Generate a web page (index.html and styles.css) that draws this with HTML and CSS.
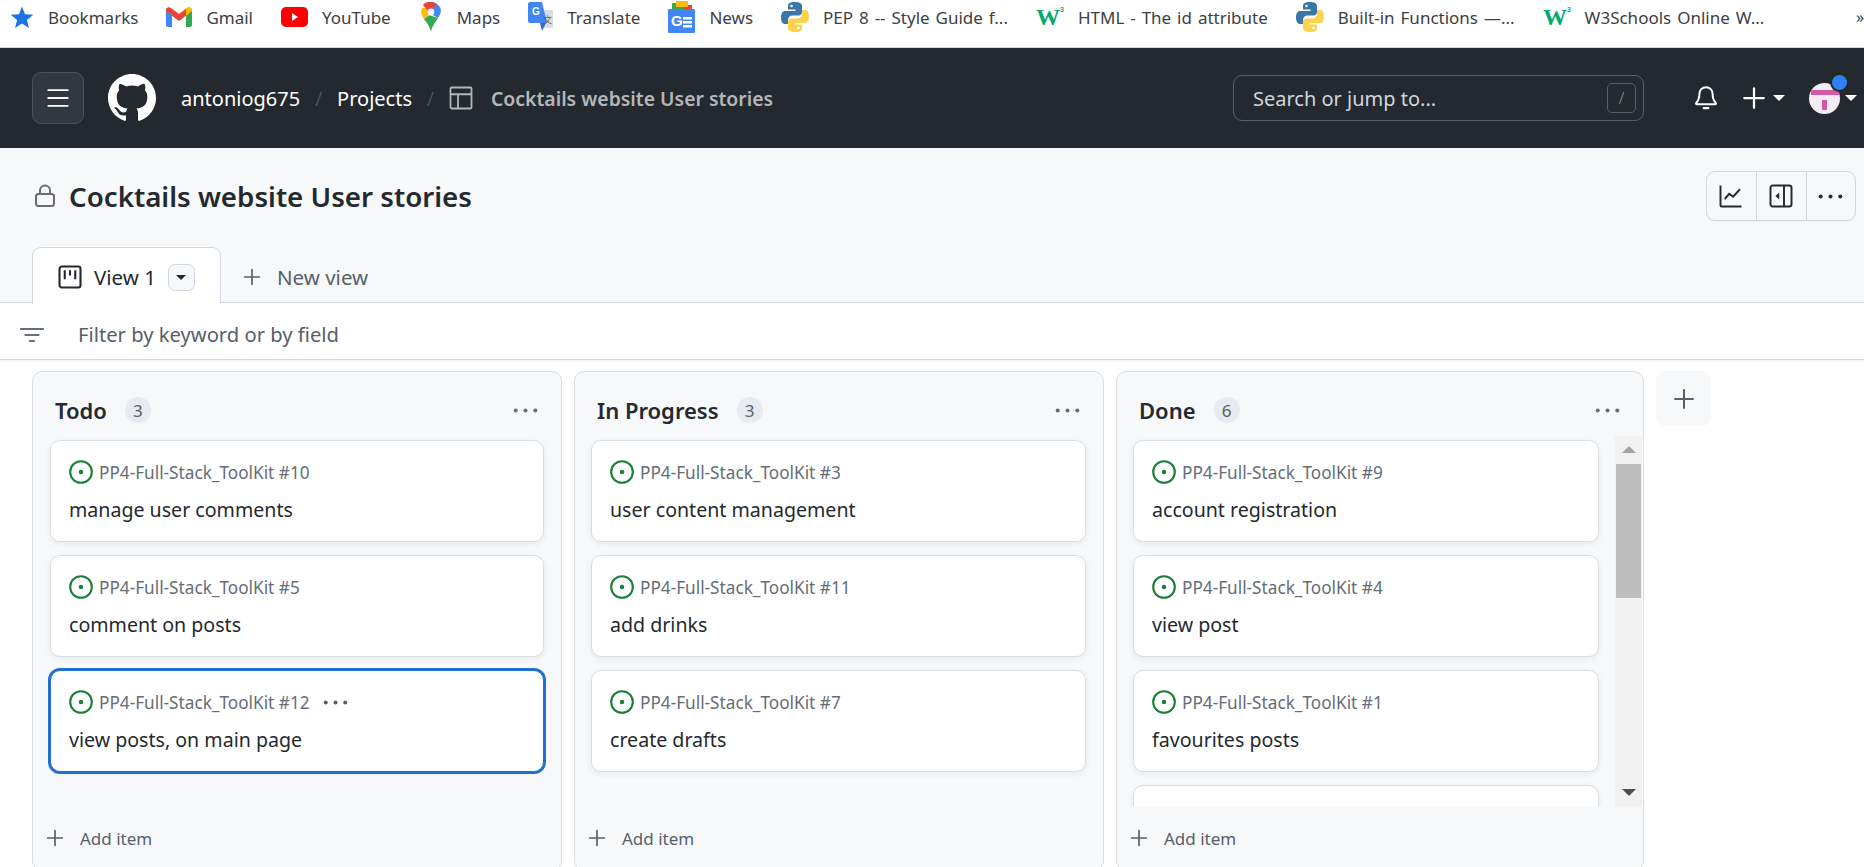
FILE: index.html
```html
<!DOCTYPE html>
<html lang="en">
<head>
    <meta charset="UTF-8">
    <title>Cocktails website User stories</title>
    <link rel="stylesheet" href="styles.css">
</head>
<body>
    <svg class="sprites" width="0" height="0">
        <symbol id="i-python" viewBox="0 0 28 32">
            <path fill="#3a76a8" d="M14 1c-6 0-7 2-7 4.500v3h7.500v1.500H4c-2.500 0-4 2.500-4 6.500s1.500 6.500 4 6.500h3v-4c0-2.500 2-4.500 4.500-4.500h6c2 0 3.500-1.500 3.500-3.500v-6C21 2.500 18.500 1 14 1z"/>
            <path fill="#fbd24c" d="M14 31c6 0 7-2 7-4.500v-3h-7.500V22H24c2.500 0 4-2.500 4-6.500S26.500 9 24 9h-3v4c0 2.500-2 4.500-4.500 4.500h-6c-2 0-3.500 1.500-3.500 3.500v5.500C7 29.500 9.500 31 14 31z"/>
            <circle cx="10.500" cy="5" r="1.300" fill="#fff"/>
            <circle cx="17.500" cy="27" r="1.300" fill="#fff"/>
        </symbol>
        <symbol id="i-plus" viewBox="0 0 16 16">
            <path d="M8 1.500v13M1.500 8h13" fill="none" stroke="currentColor" stroke-width="1.500" stroke-linecap="round"/>
        </symbol>
        <symbol id="i-kebab" viewBox="0 0 16 16">
            <circle cx="2.200" cy="8" r="1.200" fill="currentColor"/>
            <circle cx="8" cy="8" r="1.200" fill="currentColor"/>
            <circle cx="13.800" cy="8" r="1.200" fill="currentColor"/>
        </symbol>
        <symbol id="i-issue" viewBox="0 0 16 16">
            <circle cx="8" cy="8" r="7.200" fill="none" stroke="#1a7f37" stroke-width="1.400"/>
            <circle cx="8" cy="8" r="1.500" fill="#1a7f37"/>
        </symbol>
    </svg>

    <!-- barra de marcadores -->
    <div class="bookmarks">
        <a class="bm bm-first">
            <svg class="bm-icon" width="24" height="24" viewBox="0 0 24 24"><path fill="#1a73e8" d="M12 1.500l3 7.700 8.300.5-6.400 5.300 2.100 8-7-4.500-7 4.500 2.100-8L.7 9.700 9 9.200z"/></svg>
            Bookmarks
        </a>
        <a class="bm">
            <svg class="bm-icon" width="26" height="20" viewBox="0 0 26 20">
                <path fill="#4285f4" d="M0 3v15c0 1 .8 2 2 2h4V8z"/>
                <path fill="#34a853" d="M26 3v15c0 1-.8 2-2 2h-4V8z"/>
                <path fill="#ea4335" d="M0 3c0-3 3-3.500 5-2l8 6 8-6v7l-8 6-7-5.200V8L0 4z"/>
                <path fill="#fbbc04" d="M20 1.500c2-2.500 6-1.500 6 1.500v1l-6 5z"/>
            </svg>
            Gmail
        </a>
        <a class="bm">
            <svg class="bm-icon" width="27" height="20" viewBox="0 0 27 20"><rect width="27" height="20" rx="5" fill="#f00"/><path d="M11 6l6 4-6 4z" fill="#fff"/></svg>
            YouTube
        </a>
        <a class="bm">
            <svg class="bm-icon" width="24" height="30" viewBox="0 0 20 30">
                <path fill="#34a853" d="M3 17c2 3 6 7 7 13 1-6 4-9 7-14L8 13z"/>
                <path fill="#fbbc04" d="M1 6c-2 4 0 8 2 11l7-7-3-4z"/>
                <path fill="#4285f4" d="M10 0c3 0 7 2 9 5l-6 6-5-6z"/>
                <path fill="#ea4335" d="M2 3c3-4 10-4 14-1L8 10z"/>
                <path fill="#4285f4" d="M19 5c2 4 0 8-2 11l-7-4z"/>
                <circle cx="10" cy="10" r="3.400" fill="#fff" opacity=".9"/>
            </svg>
            Maps
        </a>
        <a class="bm">
            <svg class="bm-icon" width="25" height="30" viewBox="0 0 25 30">
                <path fill="#dadce0" d="M9 8h16v18H14z"/>
                <path fill="#4285f4" d="M2 0h12l5 21H2c-1 0-2-1-2-2V2c0-1 1-2 2-2z"/>
                <path fill="#3367d6" d="M12 21h6l-4 8z"/>
                <text x="4" y="13" class="fav-g">G</text>
                <text x="15" y="21" class="fav-t">文</text>
            </svg>
            Translate
        </a>
        <a class="bm">
            <svg class="bm-icon" width="27" height="32" viewBox="0 0 27 32">
                <path fill="#34a853" d="M4 2h14v8H4z"/>
                <path fill="#ea4335" d="M16 4h8v8h-8z"/>
                <path fill="#fbbc04" d="M8 0h12v6H8z"/>
                <rect y="8" width="27" height="24" rx="1" fill="#4285f4"/>
                <text x="3" y="25" class="fav-news">G</text>
                <path d="M15 16h9v2.500h-9zM15 20h9v2.500h-9zM15 24h9v2.500h-9z" fill="#fff"/>
            </svg>
            News
        </a>
        <a class="bm">
            <svg class="bm-icon" width="28" height="32"><use href="#i-python"/></svg>
            PEP 8 -- Style Guide f...
        </a>
        <a class="bm">
            <svg class="bm-icon" width="28" height="24" viewBox="0 0 28 24"><text x="0" y="20" class="w3-w">W</text><text x="24" y="7" class="w3-3">3</text></svg>
            HTML - The id attribute
        </a>
        <a class="bm">
            <svg class="bm-icon" width="28" height="32"><use href="#i-python"/></svg>
            Built-in Functions —...
        </a>
        <a class="bm">
            <svg class="bm-icon" width="28" height="24" viewBox="0 0 28 24"><text x="0" y="20" class="w3-w">W</text><text x="24" y="7" class="w3-3">3</text></svg>
            W3Schools Online W...
        </a>
        <span class="bm-more">»</span>
    </div>

    <!-- cabecera -->
    <header class="top">
        <button class="menu-btn">
            <svg width="24" height="24" viewBox="0 0 16 16"><path d="M1.500 2.800h13M1.500 8h13M1.500 13.200h13" stroke="#fff" stroke-width="1.200" stroke-linecap="round"/></svg>
        </button>
        <svg class="gh-logo" width="48" height="48" viewBox="0 0 16 16"><path fill="#fff" d="M8 0C3.580 0 0 3.580 0 8c0 3.540 2.290 6.530 5.470 7.590.4.070.55-.17.55-.38 0-.19-.01-.82-.01-1.490-2.010.37-2.530-.49-2.690-.94-.09-.23-.48-.94-.82-1.130-.28-.15-.68-.52-.01-.53.63-.01 1.080.58 1.230.82.72 1.210 1.870.87 2.330.66.070-.52.28-.87.51-1.070-1.780-.2-3.640-.89-3.640-3.950 0-.87.31-1.590.82-2.150-.08-.2-.36-1.020.08-2.120 0 0 .67-.21 2.200.82.64-.18 1.320-.27 2-.27.68 0 1.360.09 2 .27 1.530-1.040 2.200-.82 2.200-.82.44 1.100.16 1.920.08 2.120.51.56.82 1.270.82 2.150 0 3.070-1.870 3.750-3.650 3.950.29.25.54.73.54 1.480 0 1.070-.01 1.930-.01 2.200 0 .21.15.46.55.38A8.013 8.013 0 0016 8c0-4.420-3.580-8-8-8z"/></svg>
        <nav class="crumbs">
            <a>antoniog675</a>
            <span class="sep">/</span>
            <a>Projects</a>
            <span class="sep">/</span>
            <svg class="table-icon" width="24" height="24" viewBox="0 0 16 16"><path d="M1.800 1h12.400c.44 0 .8.360.8.800v12.400c0 .44-.36.800-.8.800H1.800a.8.8 0 01-.8-.8V1.800c0-.44.360-.8.800-.8zM1 5.500h14M6 5.500V15" fill="none" stroke="#b4b7ba" stroke-width="1.200"/></svg>
            <a class="crumb-title">Cocktails website User stories</a>
        </nav>
        <div class="search">
            <span>Search or jump to...</span>
            <kbd>/</kbd>
        </div>
        <div class="top-actions">
            <svg class="bell" width="24" height="26" viewBox="0 0 16 17"><path d="M8 1.300c-2.600 0-4.400 2-4.400 4.500 0 3.400-1.200 5-2.100 6-.3.400-.1.900.4.900h12.200c.5 0 .7-.5.4-.9-.9-1-2.100-2.600-2.100-6 0-2.500-1.800-4.500-4.400-4.500z" fill="none" stroke="#fff" stroke-width="1.300" stroke-linejoin="round"/><path d="M6.500 15.200h3" stroke="#fff" stroke-width="1.500" stroke-linecap="round"/></svg>
            <svg class="top-plus" width="24" height="24"><use href="#i-plus"/></svg>
            <i class="caret"></i>
            <span class="avatar">
                <svg width="31" height="31" viewBox="0 0 31 31"><circle cx="15.500" cy="15.500" r="15.500" fill="#f4ecf3"/><path d="M2 7h28v5H2zM13 17h5v10h-5z" fill="#cf5ca5"/></svg>
                <span class="avatar-dot"></span>
            </span>
            <i class="caret"></i>
        </div>
    </header>

    <!-- titulo del proyecto -->
    <section class="project-head">
        <div class="title-row">
            <svg class="lock" width="20" height="24" viewBox="0 0 20 24"><path d="M5 10V6.500a5 5 0 0110 0V10" fill="none" stroke="#656d76" stroke-width="2"/><rect x="1" y="10" width="18" height="12" rx="2.500" fill="none" stroke="#656d76" stroke-width="2"/></svg>
            <h1>Cocktails website User stories</h1>
            <div class="btn-group">
                <button>
                    <svg width="24" height="24" viewBox="0 0 16 16"><path d="M1 1v13.200c0 .44.360.8.800.8H15M3.800 10l3-3.500 2.600 2L14 3.500" fill="none" stroke="#24292f" stroke-width="1.300"/></svg>
                </button>
                <button>
                    <svg width="24" height="24" viewBox="0 0 16 16"><rect x="1" y="1" width="14" height="14" rx="1.500" fill="none" stroke="#24292f" stroke-width="1.300"/><path d="M10 1v14" stroke="#24292f" stroke-width="1.300"/><path d="M6.800 5.700v4.600L4.300 8z" fill="#24292f"/></svg>
                </button>
                <button>
                    <svg width="27" height="27" class="kebab-dark"><use href="#i-kebab"/></svg>
                </button>
            </div>
        </div>
        <div class="tabs">
            <div class="tab active">
                <svg width="24" height="24" viewBox="0 0 16 16"><rect x="1" y="1" width="14" height="14" rx="1.500" fill="none" stroke="#24292f" stroke-width="1.400"/><path d="M4.500 3.500v6M8 3.500v3.500M11.500 3.500v6" stroke="#24292f" stroke-width="1.400"/></svg>
                <span>View 1</span>
                <button class="tab-caret"><i></i></button>
            </div>
            <div class="tab new">
                <svg width="18" height="18"><use href="#i-plus"/></svg>
                <span>New view</span>
            </div>
        </div>
    </section>

    <div class="filter-bar">
        <svg width="24" height="24" viewBox="0 0 24 24"><path d="M1 7h22M5.500 13h13M10 19h4" stroke="#656d76" stroke-width="2.200" stroke-linecap="round"/></svg>
        <span>Filter by keyword or by field</span>
    </div>

    <!-- tablero -->
    <main class="board">
        <section class="column">
            <div class="col-head">
                <h2>Todo</h2>
                <span class="count">3</span>
                <svg class="col-more" width="27" height="27"><use href="#i-kebab"/></svg>
            </div>
            <div class="col-body">
                <div class="cards">
                    <article class="card">
                        <div class="card-meta"><svg width="24" height="24"><use href="#i-issue"/></svg><span>PP4-Full-Stack_ToolKit #10</span></div>
                        <p>manage user comments</p>
                    </article>
                    <article class="card">
                        <div class="card-meta"><svg width="24" height="24"><use href="#i-issue"/></svg><span>PP4-Full-Stack_ToolKit #5</span></div>
                        <p>comment on posts</p>
                    </article>
                    <article class="card focused">
                        <div class="card-meta"><svg width="24" height="24"><use href="#i-issue"/></svg><span>PP4-Full-Stack_ToolKit #12</span><svg class="card-more" width="27" height="27"><use href="#i-kebab"/></svg></div>
                        <p>view posts, on main page</p>
                    </article>
                </div>
            </div>
            <div class="col-foot">
                <svg width="18" height="18"><use href="#i-plus"/></svg>
                <span>Add item</span>
            </div>
        </section>

        <section class="column column-mid">
            <div class="col-head">
                <h2>In Progress</h2>
                <span class="count">3</span>
                <svg class="col-more" width="27" height="27"><use href="#i-kebab"/></svg>
            </div>
            <div class="col-body">
                <div class="cards">
                    <article class="card">
                        <div class="card-meta"><svg width="24" height="24"><use href="#i-issue"/></svg><span>PP4-Full-Stack_ToolKit #3</span></div>
                        <p>user content management</p>
                    </article>
                    <article class="card">
                        <div class="card-meta"><svg width="24" height="24"><use href="#i-issue"/></svg><span>PP4-Full-Stack_ToolKit #11</span></div>
                        <p>add drinks</p>
                    </article>
                    <article class="card">
                        <div class="card-meta"><svg width="24" height="24"><use href="#i-issue"/></svg><span>PP4-Full-Stack_ToolKit #7</span></div>
                        <p>create drafts</p>
                    </article>
                </div>
            </div>
            <div class="col-foot">
                <svg width="18" height="18"><use href="#i-plus"/></svg>
                <span>Add item</span>
            </div>
        </section>

        <section class="column column-done">
            <div class="col-head">
                <h2>Done</h2>
                <span class="count">6</span>
                <svg class="col-more" width="27" height="27"><use href="#i-kebab"/></svg>
            </div>
            <div class="col-body">
                <div class="cards">
                    <article class="card">
                        <div class="card-meta"><svg width="24" height="24"><use href="#i-issue"/></svg><span>PP4-Full-Stack_ToolKit #9</span></div>
                        <p>account registration</p>
                    </article>
                    <article class="card">
                        <div class="card-meta"><svg width="24" height="24"><use href="#i-issue"/></svg><span>PP4-Full-Stack_ToolKit #4</span></div>
                        <p>view post</p>
                    </article>
                    <article class="card">
                        <div class="card-meta"><svg width="24" height="24"><use href="#i-issue"/></svg><span>PP4-Full-Stack_ToolKit #1</span></div>
                        <p>favourites posts</p>
                    </article>
                    <article class="card"></article>
                </div>
                <div class="scrollbar">
                    <i class="arrow-up"></i>
                    <div class="thumb"></div>
                    <i class="arrow-down"></i>
                </div>
            </div>
            <div class="col-foot">
                <svg width="18" height="18"><use href="#i-plus"/></svg>
                <span>Add item</span>
            </div>
        </section>

        <button class="add-col">
            <svg width="22" height="22"><use href="#i-plus"/></svg>
        </button>
    </main>
</body>
</html>
```

FILE: styles.css
```css
* {
    box-sizing: border-box;
}

html, body {
    height: 867px;
}

body {
    margin: 0;
    overflow: hidden;
    background: #fff;
    color: #24292f;
    font-family: "Noto Sans", "Open Sans", Arial, sans-serif;
}

button {
    padding: 0;
    border: none;
    background: none;
    font: inherit;
}

.sprites {
    position: absolute;
}

/* barra de marcadores */
.bookmarks {
    display: flex;
    align-items: center;
    height: 48px;
    padding-bottom: 13px;
    font-size: 17px;
    word-spacing: 1.5px;
    color: #3c4043;
    white-space: nowrap;
    border-bottom: 1px solid #d8d8d8;
}

.bm {
    display: flex;
    align-items: center;
    gap: 14px;
    margin-left: 28px;
}

.bm-first {
    margin-left: 10px;
}

.bm-icon {
    flex: none;
}

.bm-more {
    margin-left: auto;
    font-size: 16px;
    width: 8px;
}

.w3-w {
    font: 700 24px "Liberation Serif", serif;
    fill: #04aa6d;
}

.w3-3 {
    font: 700 7px "Liberation Sans", sans-serif;
    fill: #04aa6d;
}

.fav-g {
    font: 700 10px "Liberation Sans", sans-serif;
    fill: #fff;
}

.fav-t {
    font: 400 9px "Noto Sans CJK SC", sans-serif;
    fill: #5f6368;
}

.fav-news {
    font: 700 15px "Liberation Sans", sans-serif;
    fill: #fff;
}

/* cabecera oscura */
.top {
    display: flex;
    align-items: center;
    height: 100px;
    padding-left: 32px;
    background: #24292f;
    color: #fff;
}

.menu-btn {
    display: flex;
    align-items: center;
    justify-content: center;
    width: 52px;
    height: 52px;
    background: #32383f;
    border: 1px solid #4c5258;
    border-radius: 9px;
}

.gh-logo {
    margin-left: 24px;
}

.crumbs {
    display: flex;
    align-items: center;
    margin-left: 25px;
    font-size: 20px;
    white-space: nowrap;
}

.sep {
    margin: 0 15px 0 15px;
    color: #5b6168;
    font-weight: 300;
}

.table-icon {
    margin-right: 18px;
}

.crumb-title {
    font-size: 19.4px;
    font-weight: 600;
    color: #b4b7ba;
}

.search {
    display: flex;
    align-items: center;
    justify-content: space-between;
    width: 411px;
    height: 46px;
    margin-left: auto;
    padding: 0 7px 0 19px;
    border: 1px solid #57606a;
    border-radius: 9px;
    font-size: 20px;
    color: #d0d7de;
}

.search kbd {
    display: flex;
    align-items: center;
    justify-content: center;
    width: 29px;
    height: 30px;
    border: 1px solid #57606a;
    border-radius: 5px;
    font: 300 16px "Noto Sans", sans-serif;
    color: #8c959f;
}

.top-actions {
    display: flex;
    align-items: center;
    width: 220px;
    padding-left: 50px;
}

.top-plus {
    margin-left: 24px;
    color: #fff;
}

.caret {
    width: 0;
    height: 0;
    margin-left: 7px;
    border-style: solid;
    border-width: 6px 6px 0;
    border-color: #fff transparent transparent;
}

.avatar {
    position: relative;
    display: flex;
    margin-left: 24px;
}

.avatar + .caret {
    margin-left: 5px;
}

.avatar-dot {
    position: absolute;
    top: -8px;
    right: -7px;
    width: 15px;
    height: 15px;
    background: #2f81f7;
    border-radius: 50%;
    box-shadow: 0 0 0 2px #24292f;
}

/* titulo y pestanas */
.project-head {
    height: 155px;
    padding-top: 23px;
    background: #f6f8fa;
    border-bottom: 1px solid #d0d7de;
}

.title-row {
    display: flex;
    align-items: center;
    height: 50px;
    padding: 0 8px 0 35px;
}

.title-row h1 {
    margin: 0 0 0 14px;
    font-size: 27.7px;
    font-weight: 600;
}

.btn-group {
    display: flex;
    margin-left: auto;
    height: 50px;
    border: 1px solid #d0d7de;
    border-radius: 9px;
    background: #f6f8fa;
    box-shadow: 0 1px 0 rgba(31, 35, 40, 0.04);
}

.btn-group button {
    display: flex;
    align-items: center;
    justify-content: center;
    width: 49.5px;
    border-left: 1px solid #d0d7de;
}

.btn-group button:first-child {
    border-left: none;
}

.kebab-dark {
    color: #24292f;
}

.tabs {
    display: flex;
    height: 57px;
    margin-top: 26px;
    padding-left: 32px;
}

.tab {
    display: flex;
    align-items: center;
    padding-top: 2px;
    font-size: 20.5px;
}

.tab.active {
    gap: 12px;
    width: 189px;
    height: 57px;
    padding-left: 25px;
    background: #fff;
    border: 1px solid #d0d7de;
    border-bottom: none;
    border-radius: 9px 9px 0 0;
}

.tab-caret {
    display: flex;
    align-items: center;
    justify-content: center;
    width: 27px;
    height: 27px;
    background: #f6f8fa;
    border: 1px solid #d0d7de;
    border-radius: 7px;
}

.tab-caret i {
    width: 0;
    height: 0;
    border-style: solid;
    border-width: 5px 5px 0;
    border-color: #24292f transparent transparent;
}

.tab.new {
    gap: 16px;
    margin-left: 22px;
    color: #57606a;
}

/* filtro */
.filter-bar {
    display: flex;
    align-items: center;
    gap: 34px;
    height: 57px;
    padding: 6px 0 0 20px;
    font-size: 20.2px;
    color: #57606a;
    border-bottom: 1px solid #d0d7de;
    box-shadow: 0 1px 3px rgba(31, 35, 40, 0.08);
}

/* tablero */
.board {
    display: flex;
    align-items: flex-start;
    gap: 12px;
    padding: 11px 0 0 32px;
}

.column {
    width: 530px;
    height: 500px;
    flex: none;
    background: #f6f8fa;
    border: 1px solid #d8dee4;
    border-radius: 10px;
}

.column-done {
    width: 528px;
}

.col-head {
    display: flex;
    align-items: center;
    height: 64px;
    padding: 12px 22px 0 22px;
}

.col-head h2 {
    margin: 0;
    font-size: 22px;
    font-weight: 600;
}

.count {
    display: flex;
    align-items: center;
    justify-content: center;
    min-width: 26px;
    height: 26px;
    margin-left: 18px;
    background: #e7eaee;
    border-radius: 50%;
    font-size: 17px;
    color: #57606a;
}

.col-more {
    margin-left: auto;
    color: #656d76;
}

.col-body {
    display: flex;
    height: 370px;
    overflow: hidden;
}

.cards {
    display: flex;
    flex-direction: column;
    gap: 13px;
    flex: 1;
    padding: 4px 17px 0;
}

.column-mid .cards {
    padding-left: 16px;
}

.column-done .cards {
    padding: 4px 16px 0;
}

.card {
    flex: none;
    height: 102px;
    padding: 19px 18px 0;
    background: #fff;
    border: 1px solid #d8dee4;
    border-radius: 10px;
    box-shadow: 0 2px 6px rgba(31, 35, 40, 0.07);
}

.card.focused {
    border-color: #1f6fd1;
    box-shadow: 0 0 0 2px #1f6fd1;
}

.card-meta {
    display: flex;
    align-items: center;
    gap: 6px;
    height: 24px;
    font-size: 17.2px;
    color: #656d76;
}

.card-more {
    margin-left: 6px;
    color: #57606a;
}

.card p {
    margin: 13px 0 0;
    font-size: 19.6px;
    line-height: 26px;
    color: #24292f;
}

.col-foot {
    display: flex;
    align-items: center;
    gap: 16px;
    height: 64px;
    padding-left: 13px;
    font-size: 17px;
    color: #57606a;
}

/* scrollbar de la columna Done */
.scrollbar {
    position: relative;
    flex: none;
    width: 27px;
    margin-right: 1px;
    background: #f1f1f1;
}

.thumb {
    position: absolute;
    top: 28px;
    left: 1px;
    width: 25px;
    height: 134px;
    background: #bdbdbd;
}

.arrow-up,
.arrow-down {
    position: absolute;
    left: 7px;
    width: 0;
    height: 0;
    border-style: solid;
}

.arrow-up {
    top: 10px;
    border-width: 0 7px 7px;
    border-color: transparent transparent #a3a3a3;
}

.arrow-down {
    bottom: 10px;
    border-width: 7px 7px 0;
    border-color: #505050 transparent transparent;
}

.add-col {
    display: flex;
    align-items: center;
    justify-content: center;
    width: 55px;
    height: 55px;
    background: #f6f8fa;
    border-radius: 9px;
    color: #57606a;
}
```
